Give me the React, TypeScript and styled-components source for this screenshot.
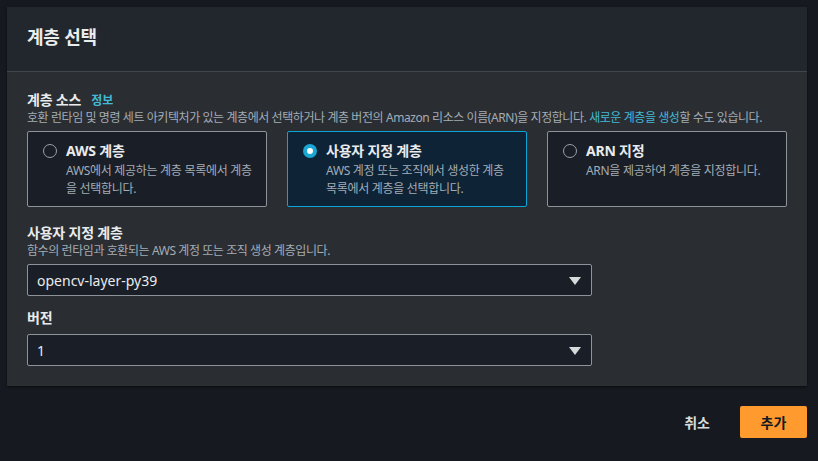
import React from "react";
import styled, { createGlobalStyle } from "styled-components";

const Global = createGlobalStyle`
  html, body { margin: 0; padding: 0; background: #16191f; }
  body { font-family: "Noto Sans", "Noto Sans CJK KR", sans-serif; color: #d1d5db; }
  * { box-sizing: border-box; }
`;

const Page = styled.div`
  width: 818px;
  height: 461px;
  padding: 7px 11px 0 7px;
  background: #16191f;
`;

const Container = styled.section`
  background: #2a2e33;
  box-shadow: 0 1px 2px rgba(0,0,0,0.5);
`;

const Header = styled.header`
  height: 65px;
  background: #22262d;
  border-bottom: 1px solid #41464d;
  display: flex;
  align-items: center;
  padding: 0 20px;
`;

const Title = styled.h2`
  margin: 0;
  font-size: 18px;
  font-weight: 700;
  color: #eaeded;
  line-height: 22px;
  margin-top: -4px;
  letter-spacing: -0.2px;
`;

const Body = styled.div`
  padding: 19px 20px 20px 20px;
  display: flex;
  flex-direction: column;
`;

const Field = styled.div<{ $mt?: number }>`
  display: flex;
  flex-direction: column;
  margin-top: ${(p) => p.$mt ?? 0}px;
`;

const LabelRow = styled.div`
  display: flex;
  align-items: baseline;
  gap: 10px;
`;

const Label = styled.div`
  font-size: 14px;
  font-weight: 700;
  color: #e9ebed;
  line-height: 18px;
  letter-spacing: -0.2px;
`;

const InfoLink = styled.a`
  font-size: 12px;
  font-weight: 700;
  color: #44b9d6;
  text-decoration: none;
`;

const Desc = styled.div`
  font-size: 12px;
  color: #a3acb5;
  line-height: 18px;
  letter-spacing: -0.42px;
  white-space: nowrap;
`;

const Link = styled.a`
  color: #44b9d6;
  text-decoration: none;
`;

const Tiles = styled.div`
  display: grid;
  grid-template-columns: repeat(3, 240px);
  gap: 20px;
  margin-top: 4px;
`;

const Tile = styled.label<{ $selected?: boolean }>`
  height: 76px;
  border: 1px solid ${(p) => (p.$selected ? "#0ea5d6" : "#8d9399")};
  background: ${(p) => (p.$selected ? "#0f2336" : "#1a1f27")};
  border-radius: 2px;
  padding: 8px 6px 0 15px;
  display: flex;
  gap: 9px;
`;

const Radio = styled.span<{ $selected?: boolean }>`
  flex: none;
  width: 14px;
  height: 14px;
  margin-top: 4px;
  border-radius: 50%;
  border: ${(p) => (p.$selected ? "4px solid #1aa7d4" : "1.5px solid #99a0a7")};
  background: ${(p) => (p.$selected ? "#ffffff" : "transparent")};
`;

const TileText = styled.div`
  display: flex;
  flex-direction: column;
`;

const TileTitle = styled.div`
  font-size: 14px;
  font-weight: 700;
  color: #e9ebed;
  line-height: 22px;
  letter-spacing: -0.2px;
`;

const TileDesc = styled.div`
  font-size: 12px;
  color: #a3acb5;
  line-height: 18px;
  letter-spacing: -0.3px;
  white-space: nowrap;
`;

const Select = styled.div<{ $mt: number }>`
  width: 565px;
  height: 32px;
  margin-top: ${(p) => p.$mt}px;
  border: 1px solid #8d9399;
  border-radius: 2px;
  background: #1a1f27;
  display: flex;
  align-items: center;
  justify-content: space-between;
  padding: 0 10px 0 9px;
  font-size: 14px;
  color: #e9ebed;
`;

const Caret = styled.svg`
  width: 12px;
  height: 10px;
  margin-top: 1px;
`;

const Footer = styled.div`
  display: flex;
  justify-content: flex-end;
  align-items: center;
  gap: 30px;
  padding: 20px 0 0 0;
`;

const TextButton = styled.button`
  background: none;
  border: none;
  font-family: inherit;
  font-size: 14px;
  font-weight: 700;
  color: #d5dbdb;
  padding: 0;
`;

const PrimaryButton = styled.button`
  width: 67px;
  height: 32px;
  background: #ff9a2e;
  border: none;
  border-radius: 2px;
  font-family: inherit;
  font-size: 14px;
  font-weight: 700;
  color: #16191f;
`;

const SelectField: React.FC<{ value: string; mt: number }> = ({ value, mt }) => (
  <Select $mt={mt}>
    <span>{value}</span>
    <Caret viewBox="0 0 12 10">
      <path d="M0 1 L12 1 L6 9 Z" fill="#d5dbdb" />
    </Caret>
  </Select>
);

const options = [
  { title: "AWS 계층", desc: ["AWS에서 제공하는 계층 목록에서 계층", "을 선택합니다."], selected: false },
  { title: "사용자 지정 계층", desc: ["AWS 계정 또는 조직에서 생성한 계층", "목록에서 계층을 선택합니다."], selected: true },
  { title: "ARN 지정", desc: ["ARN을 제공하여 계층을 지정합니다."], selected: false },
];

export default function App() {
  return (
    <Page>
      <Global />
      <Container>
        <Header>
          <Title>계층 선택</Title>
        </Header>
        <Body>
          <Field>
            <LabelRow>
              <Label>계층 소스</Label>
              <InfoLink>정보</InfoLink>
            </LabelRow>
            <Desc>
              호환 런타임 및 명령 세트 아키텍처가 있는 계층에서 선택하거나 계층 버전의 Amazon 리소스 이름(ARN)을 지정합니다.{" "}
              <Link>새로운 계층을 생성</Link>할 수도 있습니다.
            </Desc>
            <Tiles>
              {options.map((o) => (
                <Tile key={o.title} $selected={o.selected}>
                  <Radio $selected={o.selected} />
                  <TileText>
                    <TileTitle>{o.title}</TileTitle>
                    {o.desc.map((d) => (
                      <TileDesc key={d}>{d}</TileDesc>
                    ))}
                  </TileText>
                </Tile>
              ))}
            </Tiles>
          </Field>
          <Field $mt={17}>
            <Label>사용자 지정 계층</Label>
            <Desc>함수의 런타임과 호환되는 AWS 계정 또는 조직 생성 계층입니다.</Desc>
            <SelectField value="opencv-layer-py39" mt={4} />
          </Field>
          <Field $mt={13}>
            <Label>버전</Label>
            <SelectField value="1" mt={7} />
          </Field>
        </Body>
      </Container>
      <Footer>
        <TextButton>취소</TextButton>
        <PrimaryButton>추가</PrimaryButton>
      </Footer>
    </Page>
  );
}
